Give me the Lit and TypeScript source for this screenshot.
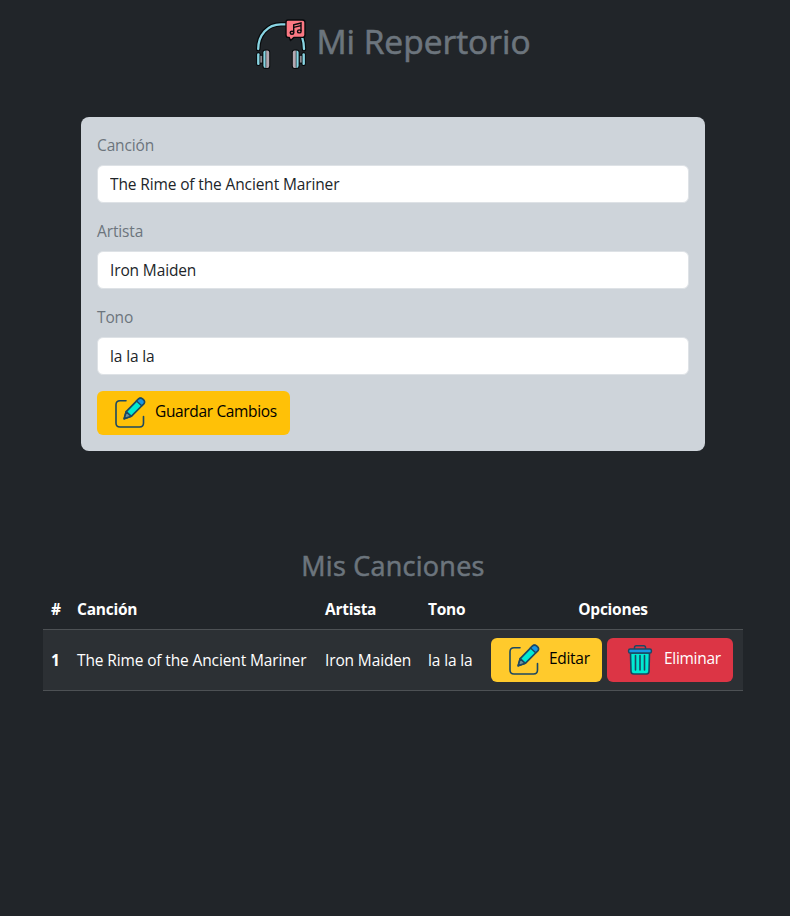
import { LitElement, html, svg, css } from "lit";
import { customElement, property, state } from "lit/decorators.js";

interface Song {
  title: string;
  artist: string;
  tone: string;
}

@customElement("app-icon")
class AppIcon extends LitElement {
  @property() name = "edit";

  static styles = css`
    :host { display: block; flex: none; }
    svg { display: block; width: 100%; height: 100%; }
  `;

  private edit() {
    return svg`
      <path d="M12 3.7H6Q2 3.7 2 7.7V26Q2 30 6 30H25.5Q29.5 30 29.5 26V19.5" fill="none" stroke="#1c4862" stroke-width="1.6" stroke-linecap="round"/>
      <path d="M12.2 14.6L24.2 2.3Q26.3 .3 28.6 2L29.5 2.9Q31.4 5 29.6 7L17.3 19.3L10.2 21.8Z" fill="#00ebd3" stroke="#1c4862" stroke-width="1.7" stroke-linejoin="round"/>
      <path d="M24.2 2.3Q26.3 .3 28.6 2L29.5 2.9Q31.4 5 29.6 7L27.7 8.8L22.5 4Z" fill="#1798e5" stroke="#1c4862" stroke-width="1.4"/>
      <path d="M12.2 14.6L17.3 19.3L10.2 21.8Z" fill="#6f9499" stroke="#1c4862" stroke-width="1.6" stroke-linejoin="round"/>`;
  }

  private trash() {
    return svg`
      <path d="M10.5 5V3.5Q10.5 1.7 12.3 1.7H19.7Q21.5 1.7 21.5 3.5V5" fill="none" stroke="#1c4862" stroke-width="1.5"/>
      <path d="M6.5 9L7 27.5Q7.2 30 9.7 30H22.3Q24.8 30 25 27.5L25.5 9Z" fill="#00ebd3" stroke="#1c4862" stroke-width="1.6"/>
      <rect x="4.6" y="5" width="22.8" height="4" rx="1.6" fill="#1798e5" stroke="#1c4862" stroke-width="1.5"/>
      <path d="M11.5 11.5V26M16 11.5V26M20.5 11.5V26" stroke="#1c4862" stroke-width="1.6" stroke-linecap="round"/>`;
  }

  private cup() {
    return svg`
      <rect x="1.2" y="34.2" width="4.4" height="13.8" rx="2" fill="#070a0c"/>
      <rect x="2.1" y="35.2" width="2.5" height="11.8" rx="1.2" fill="#88d4e2"/>
      <rect x="4.8" y="36.8" width="3.4" height="8.8" fill="#070a0c"/>
      <rect x="5.3" y="37.8" width="2" height="6.8" fill="#8f8990"/>
      <rect x="7.4" y="31.4" width="7.8" height="19.6" rx="3" fill="#070a0c"/>
      <path d="M10.6 32.4Q8.4 32.4 8.4 34.6V47.8Q8.4 50 10.6 50Z" fill="#88d4e2"/>
      <path d="M11.2 32.4H12.4Q14.2 32.4 14.2 34.4V48Q14.2 50 12.4 50H11.2Z" fill="#b3a8b1"/>`;
  }

  private phones() {
    return svg`
      <path d="M3.2 31C3.2 17 12.5 6.3 26 6.3H31M47.3 20Q49 25 49 31" fill="none" stroke="#070a0c" stroke-width="4.6" stroke-linecap="round"/>
      <path d="M3.2 31C3.2 17 12.5 6.3 26 6.3H31M47.3 20Q49 25 49 31" fill="none" stroke="#88d4e2" stroke-width="2.3" stroke-linecap="round"/>
      ${this.cup()}
      <g transform="translate(52 0) scale(-1 1)">${this.cup()}</g>
      <path d="M33 2H47.5Q50 2 50 4.5V17Q50 19.4 47.5 19.4H38.8L35.5 22.6L34.3 19.4H33Q31 19.4 31 17V4.5Q31 2 33 2Z" fill="#fb7883" stroke="#070a0c" stroke-width="1.4" stroke-linejoin="round"/>
      <path d="M38.7 14.5V6.7L46 5V13" fill="none" stroke="#070a0c" stroke-width="1.4"/>
      <path d="M38.7 9.3L46 7.6" stroke="#070a0c" stroke-width="1.2"/>
      <ellipse cx="37" cy="14.7" rx="1.8" ry="1.5" fill="#fb7883" stroke="#070a0c" stroke-width="1.4"/>
      <ellipse cx="44.3" cy="13.4" rx="1.8" ry="1.5" fill="#fb7883" stroke="#070a0c" stroke-width="1.4"/>`;
  }

  render() {
    if (this.name === "phones") return html`<svg viewBox="0 0 52 52" aria-hidden="true">${this.phones()}</svg>`;
    return html`<svg viewBox="0 0 32 32" aria-hidden="true">${this.name === "trash" ? this.trash() : this.edit()}</svg>`;
  }
}

@customElement("app-root")
class AppRoot extends LitElement {
  @state() private songs: Song[] = [
    { title: "The Rime of the Ancient Mariner", artist: "Iron Maiden", tone: "la la la" },
  ];

  static styles = css`
    :host {
      display: block;
      box-sizing: border-box;
      min-height: 916px;
      padding-top: 16px;
      background: #212529;
      color: #fff;
      font: 15.5px/24px "Open Sans", "Noto Sans", sans-serif;
      letter-spacing: -0.13px;
    }
    * { box-sizing: border-box; }
    .title {
      display: flex;
      justify-content: center;
      align-items: center;
      gap: 9px;
      height: 53px;
      margin: 0 4px 48px 0;
      color: #6c757d;
      font-size: 33.5px;
      font-weight: 500;
      line-height: 40px;
      letter-spacing: 0;
      -webkit-text-stroke: 0.6px #6c757d;
    }
    .title span { margin-top: -3px; }
    .logo { width: 52px; height: 52px; margin-top: 2px; }
    .card {
      width: 624px;
      height: 334px;
      margin-left: 81px;
      padding: 16px;
      border-radius: 8px;
      background: #ced4da;
    }
    .field { display: block; margin-bottom: 16px; }
    .label { display: block; margin-bottom: 8px; color: #6c757d; }
    .input {
      display: block;
      width: 100%;
      height: 38px;
      padding: 0 12px;
      border: 1px solid #dee2e6;
      border-radius: 6px;
      background: #fff;
      color: #212529;
      font: inherit;
      letter-spacing: inherit;
    }
    .btn {
      display: flex;
      align-items: center;
      height: 44px;
      padding: 0 0 0 17px;
      border: 0;
      border-radius: 6px;
      background: #ffc107;
      color: #000;
      font: inherit;
      letter-spacing: -0.3px;
      white-space: nowrap;
    }
    .btn app-icon { width: 32px; height: 32px; margin: 0 9px 0 0; }
    .btn span { margin-top: -4px; }
    .save { width: 193px; letter-spacing: -0.35px; }
    .edit { width: 111px; background: #ffca2c; }
    .remove { width: 126px; background: #dc3545; color: #fff; }
    .remove app-icon { margin-right: 8px; }
    .subtitle {
      margin: 98px 4px 0 0;
      color: #6c757d;
      font-size: 27px;
      font-weight: 500;
      line-height: 34px;
      text-align: center;
      letter-spacing: 0.25px;
      -webkit-text-stroke: 0.55px #6c757d;
    }
    .songs {
      width: 700px;
      margin: 6px 0 0 43px;
      border-collapse: separate;
      border-spacing: 0;
      table-layout: fixed;
    }
    .songs th, .songs td {
      padding: 8px;
      border-bottom: 1px solid #4d5154;
      text-align: left;
      white-space: nowrap;
    }
    .songs th { letter-spacing: -0.25px; }
    .songs tbody th, .songs tbody td { background: #2c3034; }
    .songs .options { text-align: center; }
    .c1 { width: 26px; }
    .c2 { width: 248px; }
    .c3 { width: 103px; }
    .c4 { width: 63px; }
    .c5 { width: 260px; }
    .actions { display: flex; gap: 5px; }
  `;

  private field(label: string, value: string) {
    return html`<label class="field"><span class="label">${label}</span><input class="input" .value=${value} /></label>`;
  }

  render() {
    const song = this.songs[0];
    return html`
      <h1 class="title"><app-icon class="logo" name="phones"></app-icon><span>Mi Repertorio</span></h1>
      <form class="card">
        ${this.field("Canción", song.title)}
        ${this.field("Artista", song.artist)}
        ${this.field("Tono", song.tone)}
        <button type="button" class="btn save"><app-icon name="edit"></app-icon><span>Guardar Cambios</span></button>
      </form>
      <h2 class="subtitle">Mis Canciones</h2>
      <table class="songs">
        <colgroup><col class="c1" /><col class="c2" /><col class="c3" /><col class="c4" /><col class="c5" /></colgroup>
        <thead>
          <tr><th>#</th><th>Canción</th><th>Artista</th><th>Tono</th><th class="options">Opciones</th></tr>
        </thead>
        <tbody>
          ${this.songs.map((s, i) => html`
            <tr>
              <th>${i + 1}</th><td>${s.title}</td><td>${s.artist}</td><td>${s.tone}</td>
              <td>
                <div class="actions">
                  <button type="button" class="btn edit"><app-icon name="edit"></app-icon><span>Editar</span></button>
                  <button type="button" class="btn remove"><app-icon name="trash"></app-icon><span>Eliminar</span></button>
                </div>
              </td>
            </tr>`)}
        </tbody>
      </table>
    `;
  }
}
